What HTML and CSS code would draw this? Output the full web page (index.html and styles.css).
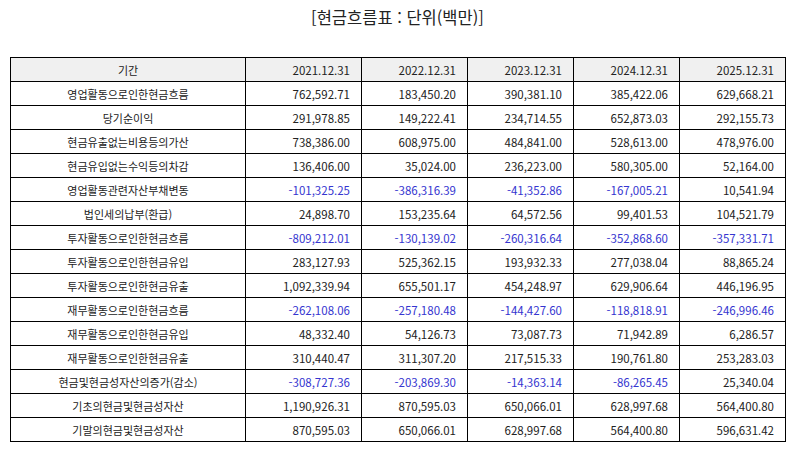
FILE: index.html
```html
<!DOCTYPE html>
<html lang="ko">
<head>
<meta charset="utf-8">
<link rel="stylesheet" href="styles.css">
</head>
<body>
<div class="page">
  <h1 class="title">[현금흐름표 : 단위(백만)]</h1>
  <table class="cf">
    <colgroup>
      <col class="c-name"><col class="c-first"><col class="c-num"><col class="c-num"><col class="c-num"><col class="c-num">
    </colgroup>
    <thead>
      <tr><th class="name">기간</th><th>2021.12.31</th><th>2022.12.31</th><th>2023.12.31</th><th>2024.12.31</th><th>2025.12.31</th></tr>
    </thead>
    <tbody>
      <tr><td class="name">영업활동으로인한현금흐름</td><td>762,592.71</td><td>183,450.20</td><td>390,381.10</td><td>385,422.06</td><td>629,668.21</td></tr>
      <tr><td class="name">당기순이익</td><td>291,978.85</td><td>149,222.41</td><td>234,714.55</td><td>652,873.03</td><td>292,155.73</td></tr>
      <tr><td class="name">현금유출없는비용등의가산</td><td>738,386.00</td><td>608,975.00</td><td>484,841.00</td><td>528,613.00</td><td>478,976.00</td></tr>
      <tr><td class="name">현금유입없는수익등의차감</td><td>136,406.00</td><td>35,024.00</td><td>236,223.00</td><td>580,305.00</td><td>52,164.00</td></tr>
      <tr><td class="name">영업활동관련자산부채변동</td><td class="neg">-101,325.25</td><td class="neg">-386,316.39</td><td class="neg">-41,352.86</td><td class="neg">-167,005.21</td><td>10,541.94</td></tr>
      <tr><td class="name">법인세의납부(환급)</td><td>24,898.70</td><td>153,235.64</td><td>64,572.56</td><td>99,401.53</td><td>104,521.79</td></tr>
      <tr><td class="name">투자활동으로인한현금흐름</td><td class="neg">-809,212.01</td><td class="neg">-130,139.02</td><td class="neg">-260,316.64</td><td class="neg">-352,868.60</td><td class="neg">-357,331.71</td></tr>
      <tr><td class="name">투자활동으로인한현금유입</td><td>283,127.93</td><td>525,362.15</td><td>193,932.33</td><td>277,038.04</td><td>88,865.24</td></tr>
      <tr><td class="name">투자활동으로인한현금유출</td><td>1,092,339.94</td><td>655,501.17</td><td>454,248.97</td><td>629,906.64</td><td>446,196.95</td></tr>
      <tr><td class="name">재무활동으로인한현금흐름</td><td class="neg">-262,108.06</td><td class="neg">-257,180.48</td><td class="neg">-144,427.60</td><td class="neg">-118,818.91</td><td class="neg">-246,996.46</td></tr>
      <tr><td class="name">재무활동으로인한현금유입</td><td>48,332.40</td><td>54,126.73</td><td>73,087.73</td><td>71,942.89</td><td>6,286.57</td></tr>
      <tr><td class="name">재무활동으로인한현금유출</td><td>310,440.47</td><td>311,307.20</td><td>217,515.33</td><td>190,761.80</td><td>253,283.03</td></tr>
      <tr><td class="name">현금및현금성자산의증가(감소)</td><td class="neg">-308,727.36</td><td class="neg">-203,869.30</td><td class="neg">-14,363.14</td><td class="neg">-86,265.45</td><td>25,340.04</td></tr>
      <tr><td class="name">기초의현금및현금성자산</td><td>1,190,926.31</td><td>870,595.03</td><td>650,066.01</td><td>628,997.68</td><td>564,400.80</td></tr>
      <tr><td class="name">기말의현금및현금성자산</td><td>870,595.03</td><td>650,066.01</td><td>628,997.68</td><td>564,400.80</td><td>596,631.42</td></tr>
    </tbody>
  </table>
</div>
</body>
</html>
```

FILE: styles.css
```css
html, body {
  margin: 0;
  padding: 0;
  background: #fff;
}
.page {
  padding: 0 9px 0 10px;
  font-family: "Noto Sans CJK KR", "Noto Sans", sans-serif;
  color: #222;
}
.title {
  margin: 0;
  padding-top: 7px;
  height: 50px;
  font-size: 16.5px;
  line-height: 20px;
  font-weight: normal;
  text-align: center;
  color: #222;
}
.cf {
  width: 775px;
  table-layout: fixed;
  border-collapse: collapse;
  font-size: 11.5px;
}
.c-name { width: 235px; }
.c-first { width: 116px; }
.c-num { width: 106px; }
.cf th, .cf td {
  border: 1px solid #000;
  height: 24px;
  padding: 0 11px 0 4px;
  text-align: right;
  font-weight: normal;
  line-height: 14px;
  box-sizing: border-box;
  white-space: nowrap;
}
.cf th {
  background: #f0f0f0;
}
.cf .name {
  text-align: center;
  padding: 0 4px;
  font-size: 11px;
}
.cf .neg {
  color: #3535d0;
}
```
